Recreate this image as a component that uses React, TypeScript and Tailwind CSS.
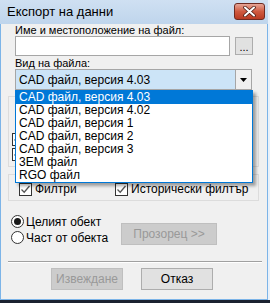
import React from 'react';

const font = { fontFamily: '"Liberation Sans", Arial, sans-serif' };

function CheckBox({ checked }: { checked?: boolean }) {
  return (
    <span className="w-[13px] h-[13px] shrink-0 border border-[#333333] bg-white flex items-center justify-center">
      {checked && (
        <svg width="11" height="11" viewBox="0 0 11 11">
          <path d="M1.5 5.5 L4.2 8.2 L9.5 2" fill="none" stroke="#555555" strokeWidth="1.3" />
        </svg>
      )}
    </span>
  );
}

function Radio({ checked }: { checked?: boolean }) {
  return (
    <span className="w-[13px] h-[13px] shrink-0 rounded-full border border-[#333333] bg-white flex items-center justify-center">
      {checked && <span className="w-[7px] h-[7px] rounded-full bg-[#1a1a1a]" />}
    </span>
  );
}

const fileTypes = [
  'CAD файл, версия 4.03',
  'CAD файл, версия 4.02',
  'CAD файл, версия 1',
  'CAD файл, версия 2',
  'CAD файл, версия 3',
  '3EM файл',
  'RGO файл',
];

export default function App() {
  return (
    <div className="w-[270px] h-[303px] flex flex-col bg-[#1b2230] text-[12px] text-black" style={font}>
      <div className="h-[300px] flex bg-[#e9f1fa]">
        {/* Window */}
        <div className="relative w-[268px] h-[300px] flex flex-col">
          {/* Title bar */}
          <div className="h-[24px] shrink-0 flex items-start justify-between bg-gradient-to-b from-[#cfe0f2] to-[#bfd5ec]">
            <span className="pl-[7px] pt-[5px] text-[13px] leading-[14px] text-black">Експорт на данни</span>
            <div className="mt-[3px] mr-[3px] w-[31px] h-[17px] rounded-[3px] border border-[#6e2b22] bg-gradient-to-b from-[#e6a597] via-[#cf5a40] to-[#b93a22] flex items-center justify-center">
              <svg width="13" height="11" viewBox="0 0 13 11">
                <path d="M2 1.5 L11 9.5 M11 1.5 L2 9.5" stroke="#4a1d16" strokeWidth="3.6" strokeLinecap="round" />
                <path d="M2 1.5 L11 9.5 M11 1.5 L2 9.5" stroke="#ffffff" strokeWidth="2" strokeLinecap="round" />
              </svg>
            </div>
          </div>

          {/* Body */}
          <div className="flex-1 flex flex-col bg-[#f0f0f0] border-x border-b border-[#7cb4e8]">
            <div className="ml-[14px] h-[12px] leading-[12px] text-[11px]">Име и местоположение на файл:</div>
            <div className="ml-[14px] h-[20px] flex items-center">
              <div className="w-[215px] h-[20px] bg-white border border-[#a6a6a6]" />
              <div className="ml-[5px] w-[18px] h-[18px] bg-[#e1e1e1] border border-[#adadad] flex items-end justify-center pb-[3px] text-[11px] leading-[8px]">...</div>
            </div>
            <div className="ml-[14px] mt-[1px] h-[12px] leading-[12px] text-[11px]">Вид на файла:</div>
            <div className="ml-[14px] w-[237px] h-[21px] flex border border-[#a6a6a6]">
              <div className="flex-1 bg-[#cce4f7] pl-[3px] flex items-center">CAD файл, версия 4.03</div>
              <div className="w-[16px] bg-[#f0f0f0] border-l border-[#a6a6a6] flex items-center justify-center">
                <svg width="7" height="4" viewBox="0 0 7 4">
                  <path d="M0 0 H7 L3.5 4 Z" fill="#000000" />
                </svg>
              </div>
            </div>

            {/* Group box with options (hidden by the drop list) */}
            <div className="ml-[7px] mt-[6px] w-[251px] h-[71px] border border-[#dcdcdc] flex flex-col gap-[2px] pl-[3px] pt-[36px]">
              <CheckBox checked />
              <CheckBox checked />
            </div>

            {/* Filters group */}
            <div className="ml-[7px] mt-[7px] w-[251px] h-[27px] border border-[#dcdcdc] flex items-start pt-[8px] pl-[10px]">
              <div className="w-[96px] flex items-center gap-[3px]"><CheckBox checked /><span className="leading-[13px]">Филтри</span></div>
              <div className="flex items-center gap-[3px]"><CheckBox checked /><span className="leading-[13px]">Исторически филтър</span></div>
            </div>

            {/* Object scope */}
            <div className="ml-[10px] mt-[14px] flex items-start">
              <div className="w-[110px] flex flex-col gap-[3px]">
                <div className="flex items-center gap-[2px] h-[13px]"><Radio checked /><span>Целият обект</span></div>
                <div className="flex items-center gap-[2px] h-[13px]"><Radio /><span>Част от обекта</span></div>
              </div>
              <div className="mt-[8px] w-[96px] h-[22px] bg-[#cccccc] border border-[#bfbfbf] text-[#999999] flex items-center justify-center">Прозорец &gt;&gt;</div>
            </div>

            <div className="ml-[7px] mt-[16px] w-[254px] border-t border-[#a0a0a0] border-b border-b-white" />

            <div className="mt-[5px] flex">
              <div className="ml-[50px] w-[72px] h-[22px] bg-[#cccccc] border border-[#bfbfbf] text-[#999999] flex items-center justify-center">Извеждане</div>
              <div className="ml-[18px] w-[72px] h-[22px] bg-[#e1e1e1] border border-[#adadad] flex items-center justify-center">Отказ</div>
            </div>
          </div>

          {/* Open drop-down list */}
          <div className="absolute left-[15px] top-[90px] w-[238px] h-[93px] bg-white border border-[#0078d7] shadow-[3px_3px_3px_rgba(0,0,0,0.35)] flex flex-col">
            {fileTypes.map((t, i) => (
              <div
                key={t}
                className={`h-[13px] leading-[13px] pl-[3px] ${i === 0 ? 'bg-[#0078d7] text-white' : 'text-black'}`}
              >
                {t}
              </div>
            ))}
          </div>
        </div>
      </div>
    </div>
  );
}
